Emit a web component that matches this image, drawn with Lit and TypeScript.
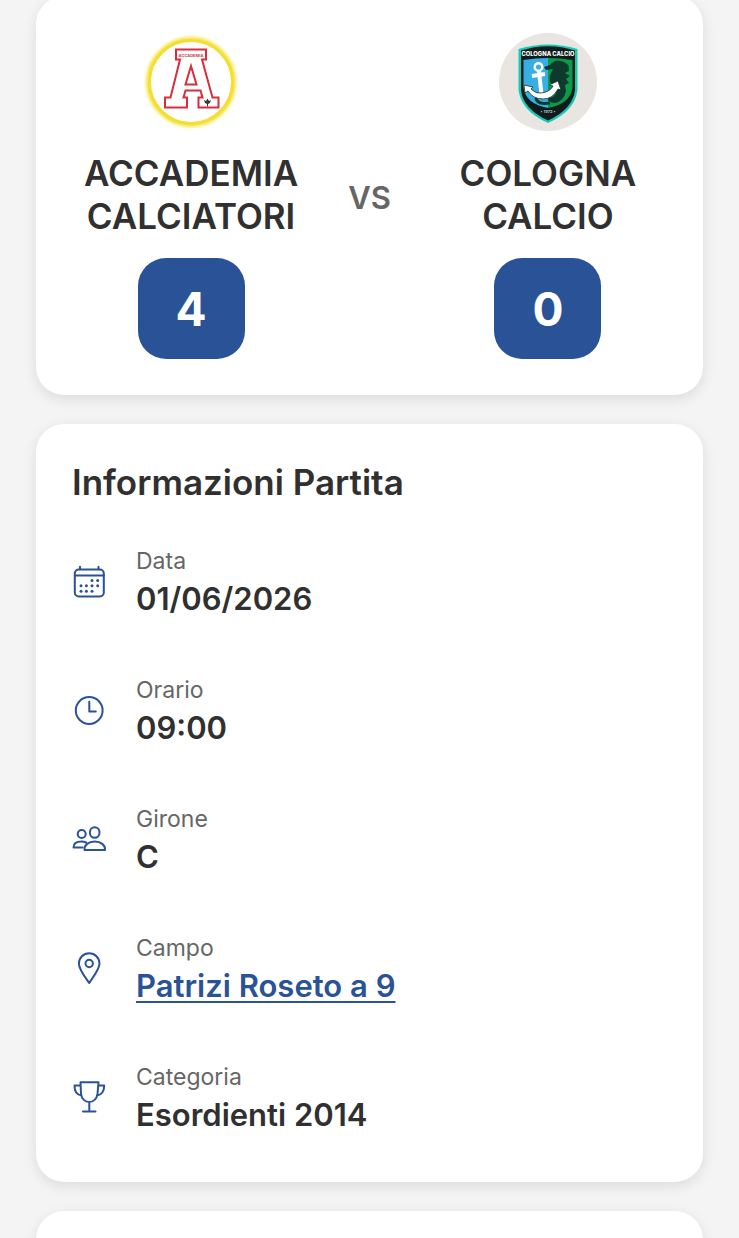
import { LitElement, html, css, svg } from "lit";
import { customElement, property } from "lit/decorators.js";

const calendar = svg`<rect x="2.800" y="4.500" width="29" height="27" rx="4"/><path d="M3 10.500h29M8 1.800v2.500M26.500 1.800v2.500"/>
  <g fill="currentColor" stroke="none"><circle cx="20" cy="15.500" r="1.500"/><circle cx="25.700" cy="15.500" r="1.500"/>
  <circle cx="9" cy="20.800" r="1.500"/><circle cx="14.400" cy="20.800" r="1.500"/><circle cx="20" cy="20.800" r="1.500"/><circle cx="25.700" cy="20.800" r="1.500"/>
  <circle cx="9" cy="26.200" r="1.500"/><circle cx="14.400" cy="26.200" r="1.500"/><circle cx="20" cy="26.200" r="1.500"/></g>`;
const clock = svg`<circle cx="17.200" cy="16.500" r="13.400"/><path d="M17.300 7.800v9.700h6.500"/>`;
const people = svg`<circle cx="9.700" cy="11" r="4"/><ellipse cx="22.700" cy="9.500" rx="4.800" ry="5.300"/>
  <path d="M12.500 27C12 22 16.500 18.500 22.700 18.500S33.400 22 33 27ZM10.500 24.500H1.500C1.500 20.500 5 18.500 9.500 18.500q2.500 0 4.500 1"/>`;
const pin = svg`<path d="M17.200 31C13 25 6.900 17.500 6.900 11.500a10.300 10.300 0 0 1 20.600 0C27.500 17.500 21 25 17.200 31Z"/><circle cx="17.200" cy="11.500" r="3.700"/>`;
const trophy = svg`<path d="M8.500 1.300h18L25.500 13c-.5 5-4.500 8-8.300 8S9.500 18 9 13ZM8.600 4.500H2.500C2.500 10 5 14 9.500 14.500M26.200 4.500h6C32.200 10 29.500 14 25 14.500M17.300 21v9.500M11 30.500h12.500"/>`;

const accademia = svg`
  <defs><filter id="glow" x="-20%" y="-20%" width="140%" height="140%"><feGaussianBlur stdDeviation="1.700"/></filter></defs>
  <circle cx="50" cy="50" r="42" fill="none" stroke="#f6e545" stroke-width="6" filter="url(#glow)"/>
  <circle cx="50" cy="50" r="41.500" fill="#fff" stroke="#f2de35" stroke-width="3"/>
  <path fill="#fff" stroke="#d92d3c" stroke-width="2" d="M35 17.500h30v10h-4l10.500 38H77.500v10H57.500v-10h4l-2-7H44.500l-2 7h3.500v10H24v-10h5.500L39 27.500h-4ZM50 34l-5.500 18.500h11Z"/>
  <text x="50" y="24.500" text-anchor="middle" font-family="Inter, sans-serif" font-size="4" font-weight="700" fill="#c8434e">ACCADEMIA</text>
  <path fill="#43352f" d="M66.500 66.500 68 69l2-1-1 3-2 1v2.500h-1V72l-2-1-1-3 2 1Z"/>`;
const cologna = svg`
  <circle cx="50" cy="50" r="49" fill="#e9e6e1"/>
  <path fill="#17c9b5" d="M20.500 17Q50 8 79.500 17V58Q77 79 50 91Q23 79 20.500 58Z"/>
  <path fill="#101c1c" d="M23 18.500Q50 10 77 18.500V58Q75 77 50 88.500Q25 77 23 58Z"/>
  <path fill="#38aee5" d="M25.500 28Q38 26 50 26V76Q28 72 25.500 56Z"/>
  <path fill="#0b9a48" d="M50 26Q62 26 74.500 28V56Q72 72 50 76Z"/>
  <path fill="#0d3a2d" d="M52 33q5-6 11-4 9 2 8 10l-4 2 5 3-4 3 3 4-4 2 1 6q-2 10-11 12-8 0-8-7 5 3 8-1 3-5-1-8-7-6-3-14l2-4-7 1-2-3Z"/>
  <path fill="none" stroke="#0d3a2d" stroke-width="3" d="M52 71q-13 2-14-5M60 68q6-6 0-10"/>
  <path fill="none" stroke="#fff" stroke-width="4" d="M41 39 43.500 63M34 44l13-2"/>
  <circle cx="40.500" cy="35" r="3.800" fill="none" stroke="#fff" stroke-width="2.500"/>
  <path fill="#fff" stroke="#13302b" stroke-width=".8" d="M26 53l9 2-2 2q5 5 10 4 9-1 12-7l-4-1 9-4 3 9-3-1q-5 10-15 10-10 0-15-8l-3 2Z"/>
  <text x="50" y="24" text-anchor="middle" font-family="Inter, sans-serif" font-size="5.800" font-weight="800" fill="#fff">COLOGNA CALCIO</text>
  <text x="50" y="81" text-anchor="middle" font-family="Inter, sans-serif" font-size="4" font-weight="700" fill="#b9c4c1">• 1972 •</text>`;

@customElement("team-score")
class TeamScore extends LitElement {
  @property() name = "";
  @property({ type: Number }) score = 0;
  @property({ attribute: false }) crest: unknown;
  static styles = css`
    :host { display: flex; flex-direction: column; align-items: center; min-width: 0; }
    .crest { width: 100px; height: 100px; margin-bottom: 20px; }
    .name { margin: 0 0 20px; font-size: 35px; line-height: 43px; font-weight: 600; text-align: center; color: #303030; }
    .score { box-sizing: border-box; min-width: 107px; padding: 23px 36px 21px; border-radius: 28px; background: #295297;
      color: #fff; font-size: 46px; line-height: 57px; font-weight: 700; text-align: center; }
  `;
  render() {
    return html`<svg class="crest" viewBox="0 0 100 100" role="img" aria-label=${this.name}>${this.crest}</svg>
      <h2 class="name">${this.name}</h2>
      <div class="score">${this.score}</div>`;
  }
}

@customElement("info-row")
class InfoRow extends LitElement {
  @property() label = "";
  @property() value = "";
  @property() href = "";
  @property({ attribute: false }) icon: unknown;
  static styles = css`
    :host { display: flex; align-items: center; gap: 30px; }
    .icon { flex: none; width: 34px; height: 34px; fill: none; stroke: currentColor; stroke-width: 2; stroke-linejoin: round; stroke-linecap: round; color: #295297; }
    .label { font-size: 23px; line-height: 30px; color: #666; margin-bottom: 4px; }
    .value { font-size: 31px; line-height: 38px; font-weight: 600; color: #303030; }
    a { color: #295297; text-underline-offset: 4px; text-decoration-thickness: 2px; }
  `;
  render() {
    return html`<svg class="icon" viewBox="0 0 34 34" aria-hidden="true">${this.icon}</svg>
      <div><div class="label">${this.label}</div>
      <div class="value">${this.href ? html`<a href=${this.href}>${this.value}</a>` : this.value}</div></div>`;
  }
}

@customElement("app-root")
class AppRoot extends LitElement {
  static styles = css`
    :host { display: block; box-sizing: border-box; height: 100vh; overflow: hidden; background: #f4f4f4; font-family: Inter, "Liberation Sans", sans-serif; }
    main { display: flex; flex-direction: column; gap: 29px; padding: 0 36px; margin-top: -4px; }
    .card { background: #fff; border-radius: 28px; padding: 36px; box-shadow: 0 4px 14px rgba(0, 0, 0, 0.1); }
    .match { display: grid; grid-template-columns: 1fr auto 1fr; align-items: center; }
    .versus { padding: 4px 38px 0; font-size: 31px; line-height: 38px; font-weight: 600; color: #666; }
    .title { margin: 0 0 42px; font-size: 35px; line-height: 44px; font-weight: 600; color: #303030; }
    .rows { display: flex; flex-direction: column; gap: 57px; padding-bottom: 12px; }
    .next { min-height: 120px; }
  `;
  render() {
    return html`<main>
      <section class="card match">
        <team-score name="ACCADEMIA CALCIATORI" .score=${4} .crest=${accademia}></team-score>
        <span class="versus">VS</span>
        <team-score name="COLOGNA CALCIO" .score=${0} .crest=${cologna}></team-score>
      </section>
      <section class="card">
        <h2 class="title">Informazioni Partita</h2>
        <div class="rows">
          <info-row label="Data" value="01/06/2026" .icon=${calendar}></info-row>
          <info-row label="Orario" value="09:00" .icon=${clock}></info-row>
          <info-row label="Girone" value="C" .icon=${people}></info-row>
          <info-row label="Campo" value="Patrizi Roseto a 9" href="#campo" .icon=${pin}></info-row>
          <info-row label="Categoria" value="Esordienti 2014" .icon=${trophy}></info-row>
        </div>
      </section>
      <section class="card next"></section>
    </main>`;
  }
}
